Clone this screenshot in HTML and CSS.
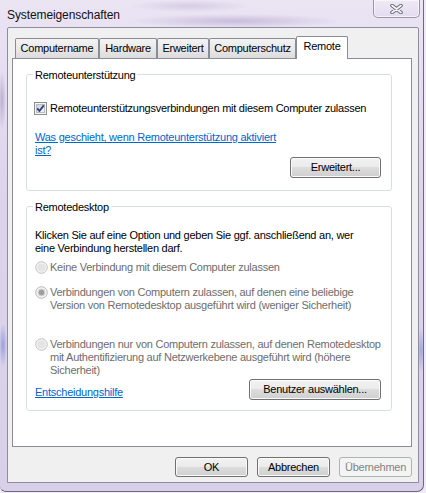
FILE: index.html
```html
<!DOCTYPE html>
<html lang="de">
<head>
<meta charset="utf-8">
<title>Systemeigenschaften</title>
<link rel="stylesheet" href="styles.css">
</head>
<body>
<div class="window">
  <div class="titlebar">
    <div class="title">Systemeigenschaften</div>
    <div class="close-btn">
      <svg width="13" height="10" viewBox="0 0 13 10">
        <path d="M2 1.5 L11 8.5 M11 1.5 L2 8.5" stroke="#6f6f7c" stroke-width="3.6" stroke-linecap="round"/>
        <path d="M2 1.5 L11 8.5 M11 1.5 L2 8.5" stroke="#f6f6fa" stroke-width="1.6" stroke-linecap="round"/>
      </svg>
    </div>
  </div>
  <div class="client">
    <div class="tabstrip">
      <div class="tab tab-name">Computername</div>
      <div class="tab tab-hw">Hardware</div>
      <div class="tab tab-adv">Erweitert</div>
      <div class="tab tab-prot">Computerschutz</div>
      <div class="tab tab-remote active">Remote</div>
    </div>
    <div class="panel">
      <div class="group group-assist">
        <div class="group-label">Remoteunterstützung</div>
        <div class="check-row">
          <span class="checkbox">
            <svg width="13" height="13" viewBox="0 0 13 13">
              <defs>
                <linearGradient id="cbg" x1="0" y1="0" x2="1" y2="1">
                  <stop offset="0" stop-color="#c9ced6"/>
                  <stop offset="1" stop-color="#f7f7f7"/>
                </linearGradient>
              </defs>
              <rect x="0.5" y="0.5" width="12" height="12" fill="#f4f4f4" stroke="#8e8f8f"/>
              <rect x="2.5" y="2.5" width="8" height="8" fill="url(#cbg)" stroke="#b5bac3"/>
              <path d="M3.2 6.4 L5.4 9 L9.8 3.3" fill="none" stroke="#2f427c" stroke-width="1.9" stroke-linejoin="round"/>
            </svg>
          </span>
          <span class="label">Remoteunterstützungsverbindungen mit diesem Computer zulassen</span>
        </div>
        <a class="link link-assist" href="#">Was geschieht, wenn Remoteunterstützung aktiviert<br>ist?</a>
        <div class="btn-row">
          <button class="btn btn-adv" type="button">Erweitert...</button>
        </div>
      </div>

      <div class="group group-desktop">
        <div class="group-label">Remotedesktop</div>
        <div class="intro">Klicken Sie auf eine Option und geben Sie ggf. anschließend an, wer<br>eine Verbindung herstellen darf.</div>
        <div class="radio-row radio-1">
          <span class="radio">
            <svg width="13" height="13" viewBox="0 0 13 13">
              <circle cx="6.5" cy="6.5" r="5.8" fill="#f3f3f3" stroke="#c3c3c3"/>
              <circle cx="6.5" cy="6.5" r="4" fill="#e4e4e4"/>
            </svg>
          </span>
          <span class="label">Keine Verbindung mit diesem Computer zulassen</span>
        </div>
        <div class="radio-row radio-2">
          <span class="radio">
            <svg width="13" height="13" viewBox="0 0 13 13">
              <circle cx="6.5" cy="6.5" r="5.8" fill="#f3f3f3" stroke="#b8b8b8"/>
              <circle cx="6.5" cy="6.5" r="3.4" fill="#9f9f9f" stroke="#d8d8d8"/>
            </svg>
          </span>
          <span class="label">Verbindungen von Computern zulassen, auf denen eine beliebige<br>Version von Remotedesktop ausgeführt wird (weniger Sicherheit)</span>
        </div>
        <div class="radio-row radio-3">
          <span class="radio">
            <svg width="13" height="13" viewBox="0 0 13 13">
              <circle cx="6.5" cy="6.5" r="5.8" fill="#f3f3f3" stroke="#c3c3c3"/>
              <circle cx="6.5" cy="6.5" r="4" fill="#e4e4e4"/>
            </svg>
          </span>
          <span class="label">Verbindungen nur von Computern zulassen, auf denen Remotedesktop<br>mit Authentifizierung auf Netzwerkebene ausgeführt wird (höhere<br>Sicherheit)</span>
        </div>
        <div class="bottom-row">
          <a class="link link-help" href="#">Entscheidungshilfe</a>
          <button class="btn btn-users" type="button">Benutzer auswählen...</button>
        </div>
      </div>
    </div>
    <div class="footer">
      <button class="btn btn-footer" type="button">OK</button>
      <button class="btn btn-footer" type="button">Abbrechen</button>
      <button class="btn btn-footer btn-disabled" type="button">Übernehmen</button>
    </div>
  </div>
</div>
</body>
</html>
```

FILE: styles.css
```css
* {
  box-sizing: border-box;
}

html {
  background: #efeaf5;
}

body {
  margin: 0;
  font-family: "Liberation Sans", Arial, sans-serif;
  font-size: 11px;
  letter-spacing: -0.25px;
  color: #000;
}

.window {
  width: 424px;
  height: 492px;
  background:
    radial-gradient(ellipse 105px 7px at 235px 21px, rgba(130, 110, 170, 0.32), rgba(130, 110, 170, 0)),
    radial-gradient(ellipse 60px 6px at 190px 6px, rgba(140, 120, 180, 0.22), rgba(140, 120, 180, 0)),
    radial-gradient(ellipse 4px 30px at 2px 100px, rgba(110, 95, 150, 0.35), rgba(110, 95, 150, 0)),
    radial-gradient(ellipse 4px 22px at 3px 345px, rgba(70, 100, 200, 0.45), rgba(70, 100, 200, 0)),
    radial-gradient(ellipse 4px 22px at 421px 350px, rgba(70, 100, 200, 0.4), rgba(70, 100, 200, 0)),
    linear-gradient(180deg, #ebe4f3 0%, #ddd4ec 40%, #d8cfe9 100%);
  border-right: 1px solid #6d6880;
  border-bottom: 1px solid #6d6880;
  border-bottom-right-radius: 7px;
  border-bottom-left-radius: 6px;
  display: flex;
  flex-direction: column;
}

.titlebar {
  height: 27px;
  flex: none;
  display: flex;
  align-items: flex-start;
}

.title {
  padding: 8px 0 0 7px;
  font-size: 12px;
  line-height: 14px;
  letter-spacing: -0.1px;
  color: #111;
}

.close-btn {
  margin-left: auto;
  margin-right: 3px;
  width: 47px;
  height: 18px;
  border: 1px solid #9a94ad;
  border-top: none;
  border-radius: 0 0 5px 5px;
  background: linear-gradient(180deg, #efe9f6, #e3dcef);
  box-shadow: inset 0 0 0 1px rgba(255, 255, 255, 0.6);
  display: flex;
  align-items: center;
  justify-content: center;
}

.client {
  margin-left: 7px;
  width: 412px;
  height: 456px;
  flex: none;
  background: #f0f0f0;
  border: 1px solid #8f8ba3;
  border-radius: 2px 2px 0 0;
  padding-top: 8px;
  display: flex;
  flex-direction: column;
}

.tabstrip {
  height: 22px;
  flex: none;
  display: flex;
  align-items: flex-end;
  padding-left: 7px;
}

.tab {
  position: relative;
  height: 20px;
  border: 1px solid #898c95;
  border-bottom: none;
  border-radius: 2px 2px 0 0;
  background: linear-gradient(180deg, #f3f3f3 0%, #e9e9e9 50%, #dcdcdc 100%);
  display: flex;
  align-items: center;
  justify-content: center;
  line-height: 13px;
  white-space: nowrap;
  color: #000;
}

.tab-name { width: 84px; }
.tab-hw { width: 58px; }
.tab-adv { width: 52px; }
.tab-prot { width: 87px; }
.tab-remote { width: 52px; }

.tab.active {
  height: 23px;
  margin-bottom: -1px;
  padding-bottom: 3px;
  background: #fff;
  z-index: 1;
}

.panel {
  margin-left: 4px;
  width: 400px;
  height: 389px;
  flex: none;
  background: #fff;
  border: 1px solid #898c95;
  padding: 15px 0 0 13px;
}

.group {
  position: relative;
  width: 366px;
  border: 1px solid #d5dfe5;
  border-radius: 3px;
  display: flex;
  flex-direction: column;
}

.group-label {
  position: absolute;
  top: -7px;
  left: 6px;
  padding: 0 2px;
  background: #fff;
  line-height: 14px;
  white-space: nowrap;
}

.group-assist {
  height: 117px;
  margin-bottom: 15px;
  padding: 27px 10px 0 8px;
}

.group-desktop {
  height: 205px;
  padding: 22px 10px 0 8px;
}

.check-row {
  display: flex;
  align-items: center;
  gap: 3px;
  height: 13px;
  line-height: 13px;
  margin-left: -1px;
  white-space: nowrap;
}

.checkbox,
.radio {
  width: 13px;
  height: 13px;
  flex: none;
  display: flex;
}

.link {
  color: #0066cc;
  text-decoration: underline;
  line-height: 13px;
  white-space: nowrap;
  align-self: flex-start;
}

.link-assist {
  margin-top: 16px;
}

.btn-row {
  display: flex;
  justify-content: flex-end;
}

.intro {
  line-height: 13px;
  white-space: nowrap;
}

.radio-row {
  display: flex;
  align-items: flex-start;
  gap: 2px;
  color: #6d6d6d;
  line-height: 13px;
  white-space: nowrap;
}

.radio-1 { margin-top: 6px; }
.radio-2 { margin-top: 12px; }
.radio-3 { margin-top: 26px; }

.bottom-row {
  display: flex;
  justify-content: space-between;
  align-items: flex-end;
  margin-top: 2px;
}

.link-help {
  align-self: flex-end;
  padding-bottom: 1px;
}

.btn {
  font-family: "Liberation Sans", Arial, sans-serif;
  font-size: 11px;
  letter-spacing: -0.25px;
  color: #000;
  height: 21px;
  padding: 0;
  border: 1px solid #707070;
  border-radius: 3px;
  background: linear-gradient(180deg, #f2f2f2 0%, #ebebeb 50%, #dddddd 50%, #cfcfcf 100%);
  box-shadow: inset 0 0 0 1px #fbfbfb;
  line-height: 13px;
  white-space: nowrap;
}

.btn-adv { width: 91px; }
.btn-users { width: 132px; }

.footer {
  margin-top: 10px;
  padding-right: 6px;
  display: flex;
  justify-content: flex-end;
  gap: 9px;
}

.btn-footer {
  width: 73px;
  height: 20px;
}

.btn-disabled {
  color: #838383;
  border-color: #adb2b5;
  background: #f4f4f4;
  box-shadow: none;
}
```
